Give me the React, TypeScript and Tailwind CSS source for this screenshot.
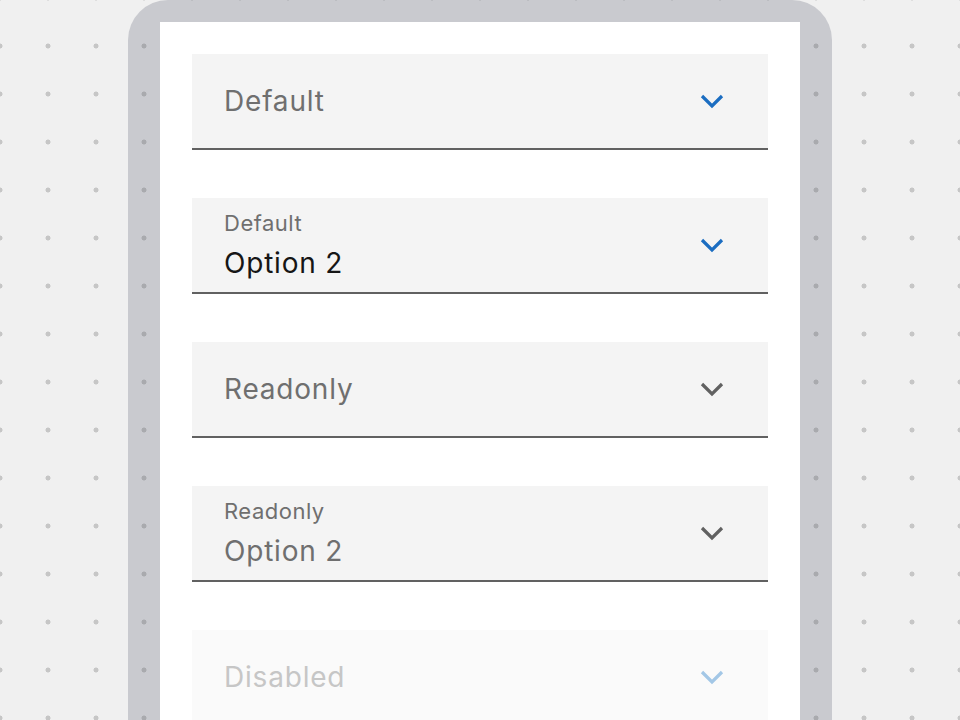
import { ReactNode } from "react";

type Kind = "default" | "readonly" | "disabled";

function Chevron({ kind }: { kind: Kind }) {
  const color =
    kind === "default" ? "#1b6dc1" : kind === "readonly" ? "#616161" : "#a3c7e6";
  return (
    <svg width="24" height="16" viewBox="0 0 24 16" fill="none">
      <polyline
        points="2,3 12,13 22,3"
        stroke={color}
        strokeWidth="3.2"
        strokeLinecap="butt"
        strokeLinejoin="miter"
      />
    </svg>
  );
}

function Field({
  kind,
  label,
  value,
}: {
  kind: Kind;
  label?: string;
  value: ReactNode;
}) {
  const bg = kind === "disabled" ? "bg-[#fafafa]" : "bg-[#f4f4f4]";
  const border = kind === "disabled" ? "border-transparent" : "border-[#616161]";
  const valueColor =
    kind === "disabled"
      ? "text-[#c6c6c6]"
      : kind === "default" && label
      ? "text-[#161616]"
      : "text-[#6f6f6f]";

  return (
    <div
      className={`flex h-[96px] shrink-0 items-center justify-between border-b-2 pl-8 pr-11 ${bg} ${border}`}
    >
      <div className="flex flex-col">
        {label && (
          <span className="mb-[9px] text-[22px] leading-[26px] tracking-[0.5px] text-[#6f6f6f]">
            {label}
          </span>
        )}
        <span className={`text-[28px] leading-[36px] tracking-[0.8px] ${valueColor}`}>
          {value}
        </span>
      </div>
      <Chevron kind={kind} />
    </div>
  );
}

export default function App() {
  return (
    <div
      className="flex h-[720px] w-[960px] justify-center overflow-hidden bg-[#f0f0f0] bg-[radial-gradient(circle,#c6c6c6_2.2px,transparent_2.8px)] bg-[size:48px_48px] bg-[position:-24px_22px]"
      style={{ fontFamily: 'Inter, "Noto Sans", sans-serif' }}
    >
      <div className="flex w-[704px] rounded-t-[40px] bg-[#c9cacf] bg-[radial-gradient(circle,#a9aaae_2.2px,transparent_2.8px)] bg-[size:48px_48px] bg-[position:-8px_22px] px-8 pt-[22px]">
        <div className="flex flex-1 flex-col gap-12 bg-white px-8 pt-8">
          <Field kind="default" value="Default" />
          <Field kind="default" label="Default" value="Option 2" />
          <Field kind="readonly" value="Readonly" />
          <Field kind="readonly" label="Readonly" value="Option 2" />
          <Field kind="disabled" value="Disabled" />
        </div>
      </div>
    </div>
  );
}
